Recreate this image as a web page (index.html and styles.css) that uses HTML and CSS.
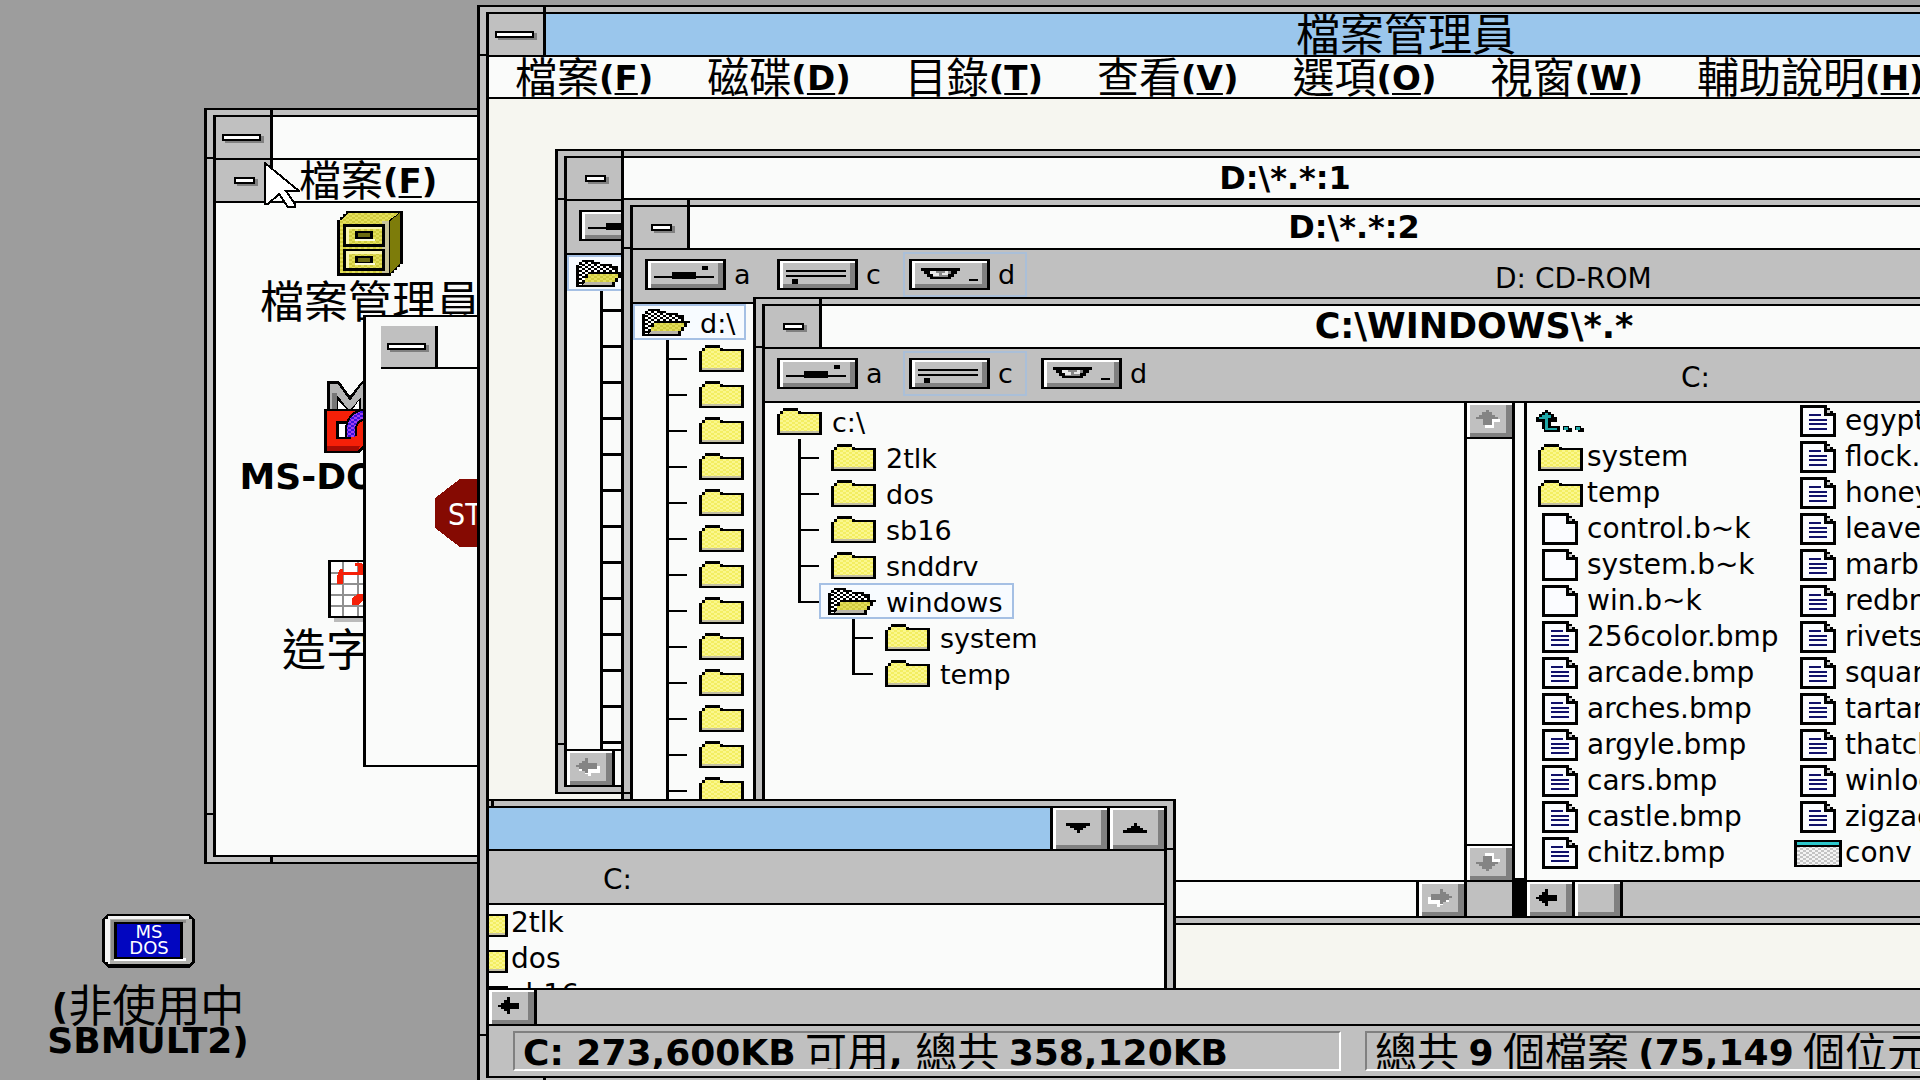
FILE: index.html
```html
<!DOCTYPE html>
<html lang="zh-Hant">
<head>
<meta charset="utf-8">
<title>檔案管理員</title>
<link rel="stylesheet" href="styles.css">
</head>
<body>
<svg class="defs" width="0" height="0" aria-hidden="true">
  <defs>
    <pattern id="dither-yellow" width="6" height="4" patternUnits="userSpaceOnUse"><rect width="6" height="4" fill="#fbf78e"/><rect width="3" height="2" fill="#f3ee62"/><rect x="3" y="2" width="3" height="2" fill="#f3ee62"/></pattern>
    <pattern id="dither-olive" width="6" height="4" patternUnits="userSpaceOnUse"><rect width="6" height="4" fill="#e4df5c"/><rect width="3" height="2" fill="#cfca3e"/><rect x="3" y="2" width="3" height="2" fill="#cfca3e"/></pattern>
    <pattern id="dither-black" width="6" height="4" patternUnits="userSpaceOnUse"><rect width="6" height="4" fill="#fff"/><rect width="3" height="2" fill="#000"/><rect x="3" y="2" width="3" height="2" fill="#000"/></pattern>
    <pattern id="dither-gray" width="6" height="4" patternUnits="userSpaceOnUse"><rect width="6" height="4" fill="#f4f4f4"/><rect width="3" height="2" fill="#c4c4c4"/><rect x="3" y="2" width="3" height="2" fill="#c4c4c4"/></pattern>
    <pattern id="dither-purple" width="6" height="4" patternUnits="userSpaceOnUse"><rect width="6" height="4" fill="#3a10e0"/><rect width="3" height="2" fill="#a040f0"/><rect x="3" y="2" width="3" height="2" fill="#a040f0"/></pattern>
  </defs>
  <symbol id="folder" viewBox="0 0 45 27"><path d="M0 6H3V3H6V0H21V3H24V4H45V27H0Z"/><path d="M6 3H21V6H42V23H3V6H6Z" fill="url(#dither-yellow)"/><path d="M3 23H42V25H3Z" fill="#c4c0a4"/></symbol>
  <symbol id="folder-open" viewBox="0 0 48 27"><path d="M0 5H3V2H6V0H18V2H24V4H36V6H42V12H48V14H45V18H42V22H39V27H0Z"/><path d="M3 5H6V2H18V4H24V6H36V8H39V12H12V16H9V20H6V25H3Z" fill="url(#dither-black)"/><path d="M12 14H42V18H39V22H9V18H12Z" fill="url(#dither-olive)"/><path d="M9 22H36V25H6Z" fill="#b8b4a8"/></symbol>
  <symbol id="doc" viewBox="0 0 36 32"><path d="M0 0H27V3H30V6H33V8H36V32H0Z"/><path d="M3 3H24V11H33V29H3Z" fill="#fbfcff"/><path d="M27 5H30V8H27Z" fill="#ccc"/></symbol>
  <symbol id="doc-text" viewBox="0 0 36 32"><use href="#doc" width="36" height="32"/><path d="M9 9H21V11H9ZM9 14H27V16H9ZM9 18H27V20H9ZM9 23H27V25H9Z" fill="#10106a"/></symbol>
  <symbol id="program" viewBox="0 0 48 27"><path d="M0 0H48V27H0Z"/><path d="M3 2H45V5H3Z" fill="#2cc8cc"/><path d="M3 7H45V25H3Z" fill="url(#dither-gray)"/></symbol>
  <symbol id="up-dir" viewBox="0 0 48 22"><path d="M9 0H12V2H15V4H18V7H21V12H15V16H24V22H8V19H6V12H0V7H3V4H6V2H9Z"/><path d="M9 3H12V5H15V8H12V18H21V20H9V9H3V7H6V5H9Z" fill="#1fa8a8"/><path d="M27 16H33V18H36V22H30V20H27ZM39 16H45V18H48V22H42V20H39Z"/><path d="M28 17H32V20H28ZM40 17H44V20H40Z" fill="#1fa8a8"/></symbol>
  <symbol id="floppy" viewBox="0 0 75 27"><path d="M6 15H24V11H48V15H66V17H48V18H24V17H6ZM54 5H60V9H54Z"/></symbol>
  <symbol id="harddisk" viewBox="0 0 75 27"><path d="M6 9H66V11H6ZM6 14H66V16H6ZM12 18H18V23H12Z"/></symbol>
  <symbol id="cdrom" viewBox="0 0 75 27"><path d="M9 7H48V10H45V13H42V16H39V18H18V16H15V13H12V10H9Z"/><path d="M18 10H39V13H36V16H21V13H18Z" fill="#888"/><path d="M18 10H24V12H27V15H21V13H18ZM30 12H33V10H36V14H30Z" fill="#e8e8e8"/><path d="M57 18H66V20H57Z"/></symbol>
  <symbol id="arrow" viewBox="0 0 24 18"><path d="M0 8H3V6H6V3H9V0H12V6H21V12H12V17H9V14H6V12H3V10H0Z"/></symbol>
  <symbol id="arrow-off" viewBox="0 0 24 18"><path d="M3 9H6V12H9V14H12V8H24V15H15V18H12V16H9V13H3Z" fill="#fff"/><path d="M0 7H3V5H6V3H9V0H12V5H21V11H12V15H9V13H6V11H3V9H0Z" fill="#848484"/></symbol>
  <symbol id="arrow-off-v" viewBox="0 0 24 18"><path d="M9 9H24V12H18V18H9Z" fill="#fff"/><path d="M10 0H13V2H16V5H19V7H22V9H16V15H7V9H0V7H3V5H6V2H10Z" fill="#848484"/></symbol>
</svg>

<main class="desktop">
  <section class="window program-manager">
    <div class="frame">
      <header class="titlebar"><button class="sys" aria-label="控制功能表"><i class="dash"></i></button></header>
      <nav class="menubar with-sys">
        <button class="sys" aria-label="控制功能表"><i class="dash small"></i></button>
        <button class="menu">檔案<b>(<u>F</u>)</b></button>
      </nav>
      <div class="icons">
        <div class="program">
          <span class="picture"><svg width="66" height="65" viewBox="0 0 66 65" shape-rendering="crispEdges">
            <path d="M0 9H3V6H6V3H9V0H66V53H63V56H60V59H57V62H54V65H0Z"/>
            <path d="M4 9L11 2H62L51 10H4Z" fill="url(#dither-olive)"/><path d="M3 9H51V62H3Z" fill="url(#dither-olive)"/>
            <path d="M45 10H52V62H45Z" fill="#c9c49a"/><path d="M53 10L63 2V52L53 62Z" fill="#7d7c0a"/>
            <path d="M6 13H48V36H6ZM6 38H48V60H6Z"/><path d="M9 16H45V33H9ZM9 40H45V57H9Z" fill="#f9f5b0"/>
            <path d="M12 18H45V33H12ZM12 43H45V57H12Z" fill="url(#dither-olive)"/>
            <path d="M18 20H36V28H18ZM18 45H36V52H18Z"/><path d="M21 22H33V26H21ZM21 47H33V51H21Z" fill="#6d6c10"/><path d="M18 28H38V30H18ZM18 52H38V54H18Z" fill="#fdfbd8"/>
          </svg></span>
          <span class="caption">檔案管理員</span>
        </div>
        <div class="program">
          <span class="picture"><svg width="92" height="72" viewBox="0 0 92 72">
            <path d="M3 0H15L26 15L38 0H48V30H3Z"/><path d="M6 3H14L26 20L38 3H46V28H37V16L27 28H24L13 14V28H6Z" fill="#b4b4b4"/><path d="M8 12H13V28H8Z" fill="#777"/><path d="M14 20L22 28H14ZM35 19V28H29Z" fill="#fff"/>
            <path d="M0 28H36L46 38V60L36 72H0Z"/><path d="M3 30H34L43 38V60L34 70H3Z" fill="#f52008"/><path d="M3 65H36L34 70H3Z" fill="#a80c04"/>
            <path d="M12 40H27V58H12Z"/><path d="M15 43H24V56H15Z" fill="#fff"/>
            <path d="M27 56C25 40 32 33 46 33" fill="none" stroke="#000" stroke-width="12"/><path d="M27 56C25 40 32 33 46 33" fill="none" stroke="url(#dither-purple)" stroke-width="8"/>
          </svg></span>
          <span class="caption"><b>MS-DOS</b> 模式</span>
        </div>
        <div class="program">
          <span class="picture"><svg width="84" height="62" viewBox="0 0 84 62">
            <path d="M6 6H84V62H6Z" fill="#bbb"/><path d="M0 0H78V58H0Z"/><path d="M3 2H75V56H3Z" fill="#fff"/>
            <path d="M15 2V56M30 2V56M45 2V56M3 13H75M3 24H75M3 35H75M3 46H75" stroke="#909090" stroke-width="2"/>
            <path d="M9 24V16L12 9H15V12H30V6H27V3H33L36 6V15H15V24ZM24 45V38L30 34H36V40L30 45Z" fill="#f52008"/>
          </svg></span>
          <span class="caption">造字程式</span>
        </div>
      </div>
    </div>
  </section>

  <section class="dialog">
    <header class="titlebar"><button class="sys" aria-label="控制功能表"><i class="dash"></i></button></header>
    <svg class="stop" width="75" height="68" viewBox="0 0 75 68"><path d="M25 0H50L75 19V49L50 68H25L0 49V19Z" fill="#850a02"/><text x="13" y="46">STOP</text></svg>
  </section>

  <div class="minimized">
    <svg width="93" height="54" viewBox="0 0 93 54"><path d="M6 0H87L93 5V48L87 54H6L0 48V5Z"/><path d="M6 2H87V50H6ZM3 5H90V48H3Z" fill="#f4f4f4"/><path d="M8 5H90V48L87 50H8Z" fill="#b0b0ac"/><path d="M9 6H84V9H12V46H9Z" fill="#8c8c88"/><path d="M12 44H84V47H12Z" fill="#fff"/><path d="M12 8H81V45H12Z"/><path d="M15 10H78V43H15Z" fill="#0206c0"/><text x="47" y="24">MS</text><text x="47" y="40">DOS</text></svg>
    <span class="caption"><b>(</b>非使用中</span>
    <span class="caption"><b>SBMULT2)</b></span>
  </div>

  <section class="window file-manager">
    <div class="frame">
      <header class="titlebar active">
        <button class="sys" aria-label="控制功能表"><i class="dash"></i></button>
        <h1 class="title app-title">檔案管理員</h1>
      </header>
      <nav class="menubar app-menu">
        <button class="menu">檔案<b>(<u>F</u>)</b></button>
        <button class="menu">磁碟<b>(<u>D</u>)</b></button>
        <button class="menu">目錄<b>(<u>T</u>)</b></button>
        <button class="menu">查看<b>(<u>V</u>)</b></button>
        <button class="menu">選項<b>(<u>O</u>)</b></button>
        <button class="menu">視窗<b>(<u>W</u>)</b></button>
        <button class="menu">輔助說明<b>(<u>H</u>)</b></button>
      </nav>

      <div class="workspace">
        <section class="window doc-one">
          <div class="frame">
            <header class="titlebar">
              <button class="sys" aria-label="控制功能表"><i class="dash small"></i></button>
              <h2 class="title">D:\*.*:1</h2>
            </header>
            <div class="drivebar">
              <div class="drive"><button aria-label="a"><svg><use href="#floppy"/></svg></button></div>
            </div>
            <div class="pane">
              <div class="row"><span class="node selected"><svg class="open"><use href="#folder-open"/></svg></span></div>
              <ul class="branches heavy">
                <li><i class="tick"></i></li><li><i class="tick"></i></li><li><i class="tick"></i></li><li><i class="tick"></i></li>
                <li><i class="tick"></i></li><li><i class="tick"></i></li><li><i class="tick"></i></li><li><i class="tick"></i></li>
                <li><i class="tick"></i></li><li><i class="tick"></i></li><li><i class="tick"></i></li><li><i class="tick"></i></li><li><i class="tick"></i></li><li><i class="tick"></i></li>
              </ul>
            </div>
            <div class="hscroll pale"><button class="arrow end-line" aria-label="向左"><svg><use href="#arrow-off"/></svg></button></div>
          </div>
        </section>

        <section class="window doc-two">
          <div class="frame">
            <header class="titlebar">
              <button class="sys" aria-label="控制功能表"><i class="dash small"></i></button>
              <h2 class="title">D:\*.*:2</h2>
            </header>
            <div class="drivebar">
              <div class="drive"><button id="two-a" aria-label="磁碟 a"><svg><use href="#floppy"/></svg></button><label for="two-a">a</label></div>
              <div class="drive"><button id="two-c" aria-label="磁碟 c"><svg><use href="#harddisk"/></svg></button><label for="two-c">c</label></div>
              <div class="drive current"><button id="two-d" aria-label="磁碟 d"><svg><use href="#cdrom"/></svg></button><label for="two-d">d</label></div>
              <span class="volume">D: CD-ROM</span>
            </div>
            <div class="pane">
              <div class="row"><span class="node selected"><svg class="open"><use href="#folder-open"/></svg><span>d:\</span></span></div>
              <ul class="branches">
                <li><i class="tick"></i><span class="node"><svg><use href="#folder"/></svg></span></li>
                <li><i class="tick"></i><span class="node"><svg><use href="#folder"/></svg></span></li>
                <li><i class="tick"></i><span class="node"><svg><use href="#folder"/></svg></span></li>
                <li><i class="tick"></i><span class="node"><svg><use href="#folder"/></svg></span></li>
                <li><i class="tick"></i><span class="node"><svg><use href="#folder"/></svg></span></li>
                <li><i class="tick"></i><span class="node"><svg><use href="#folder"/></svg></span></li>
                <li><i class="tick"></i><span class="node"><svg><use href="#folder"/></svg></span></li>
                <li><i class="tick"></i><span class="node"><svg><use href="#folder"/></svg></span></li>
                <li><i class="tick"></i><span class="node"><svg><use href="#folder"/></svg></span></li>
                <li><i class="tick"></i><span class="node"><svg><use href="#folder"/></svg></span></li>
                <li><i class="tick"></i><span class="node"><svg><use href="#folder"/></svg></span></li>
                <li><i class="tick"></i><span class="node"><svg><use href="#folder"/></svg></span></li>
                <li><i class="tick"></i><span class="node"><svg><use href="#folder"/></svg></span></li>
              </ul>
            </div>
          </div>
        </section>

        <section class="window doc-three">
          <div class="frame">
            <header class="titlebar">
              <button class="sys" aria-label="控制功能表"><i class="dash small"></i></button>
              <h2 class="title wide">C:\WINDOWS\*.*</h2>
            </header>
            <div class="drivebar">
              <div class="drive"><button id="three-a" aria-label="磁碟 a"><svg><use href="#floppy"/></svg></button><label for="three-a">a</label></div>
              <div class="drive current"><button id="three-c" aria-label="磁碟 c"><svg><use href="#harddisk"/></svg></button><label for="three-c">c</label></div>
              <div class="drive"><button id="three-d" aria-label="磁碟 d"><svg><use href="#cdrom"/></svg></button><label for="three-d">d</label></div>
              <span class="volume">C:</span>
            </div>
            <div class="split">
              <div class="column tree-column">
                <div class="pane">
                  <div class="row"><span class="node"><svg><use href="#folder"/></svg><span>c:\</span></span></div>
                  <ul class="branches">
                    <li><i class="tick"></i><span class="node"><svg><use href="#folder"/></svg><span>2tlk</span></span></li>
                    <li><i class="tick"></i><span class="node"><svg><use href="#folder"/></svg><span>dos</span></span></li>
                    <li><i class="tick"></i><span class="node"><svg><use href="#folder"/></svg><span>sb16</span></span></li>
                    <li><i class="tick"></i><span class="node"><svg><use href="#folder"/></svg><span>snddrv</span></span></li>
                    <li><i class="tick last"></i><span class="node selected"><svg class="open"><use href="#folder-open"/></svg><span>windows</span></span></li>
                  </ul>
                  <ul class="branches deep">
                    <li><i class="tick"></i><span class="node"><svg><use href="#folder"/></svg><span>system</span></span></li>
                    <li><i class="tick last"></i><span class="node"><svg><use href="#folder"/></svg><span>temp</span></span></li>
                  </ul>
                </div>
                <div class="hscroll pale align-end"><button class="arrow start-line" aria-label="向右"><svg class="flip"><use href="#arrow-off"/></svg></button></div>
              </div>
              <div class="column vscroll">
                <button class="arrow" aria-label="向上"><svg><use href="#arrow-off-v"/></svg></button>
                <div class="track"></div>
                <button class="arrow" aria-label="向下"><svg class="down"><use href="#arrow-off-v"/></svg></button>
                <div class="corner"></div>
              </div>
              <div class="splitter"></div>
              <div class="column file-column">
                <ul class="files">
                  <li><i class="kind"><svg class="up"><use href="#up-dir"/></svg></i></li>
                  <li><i class="kind"><svg><use href="#folder"/></svg></i>system</li>
                  <li><i class="kind"><svg><use href="#folder"/></svg></i>temp</li>
                  <li><i class="kind"><svg class="doc"><use href="#doc"/></svg></i>control.b~k</li>
                  <li><i class="kind"><svg class="doc"><use href="#doc"/></svg></i>system.b~k</li>
                  <li><i class="kind"><svg class="doc"><use href="#doc"/></svg></i>win.b~k</li>
                  <li><i class="kind"><svg class="doc"><use href="#doc-text"/></svg></i>256color.bmp</li>
                  <li><i class="kind"><svg class="doc"><use href="#doc-text"/></svg></i>arcade.bmp</li>
                  <li><i class="kind"><svg class="doc"><use href="#doc-text"/></svg></i>arches.bmp</li>
                  <li><i class="kind"><svg class="doc"><use href="#doc-text"/></svg></i>argyle.bmp</li>
                  <li><i class="kind"><svg class="doc"><use href="#doc-text"/></svg></i>cars.bmp</li>
                  <li><i class="kind"><svg class="doc"><use href="#doc-text"/></svg></i>castle.bmp</li>
                  <li><i class="kind"><svg class="doc"><use href="#doc-text"/></svg></i>chitz.bmp</li>
                  <li><i class="kind"><svg class="doc"><use href="#doc-text"/></svg></i>egypt.bmp</li>
                  <li><i class="kind"><svg class="doc"><use href="#doc-text"/></svg></i>flock.bmp</li>
                  <li><i class="kind"><svg class="doc"><use href="#doc-text"/></svg></i>honey.bmp</li>
                  <li><i class="kind"><svg class="doc"><use href="#doc-text"/></svg></i>leaves.bmp</li>
                  <li><i class="kind"><svg class="doc"><use href="#doc-text"/></svg></i>marble.bmp</li>
                  <li><i class="kind"><svg class="doc"><use href="#doc-text"/></svg></i>redbrick.bmp</li>
                  <li><i class="kind"><svg class="doc"><use href="#doc-text"/></svg></i>rivets.bmp</li>
                  <li><i class="kind"><svg class="doc"><use href="#doc-text"/></svg></i>squares.bmp</li>
                  <li><i class="kind"><svg class="doc"><use href="#doc-text"/></svg></i>tartan.bmp</li>
                  <li><i class="kind"><svg class="doc"><use href="#doc-text"/></svg></i>thatch.bmp</li>
                  <li><i class="kind"><svg class="doc"><use href="#doc-text"/></svg></i>winlogo.bmp</li>
                  <li><i class="kind"><svg class="doc"><use href="#doc-text"/></svg></i>zigzag.bmp</li>
                  <li><i class="kind"><svg class="exe"><use href="#program"/></svg></i>conv</li>
                </ul>
                <div class="hscroll">
                  <button class="arrow end-line" aria-label="向左"><svg><use href="#arrow"/></svg></button>
                  <button class="arrow end-line" aria-label="捲動方塊"></button>
                </div>
              </div>
            </div>
          </div>
        </section>

        <section class="window doc-four">
          <div class="frame">
            <header class="titlebar active">
              <span class="title"></span>
              <button class="arrow start-line" aria-label="最小化"><svg class="caret" viewBox="0 0 24 10"><path d="M0 0H24V3H20V5H17V7H14V10H11V7H8V5H4V3H0Z"/></svg></button>
              <button class="arrow start-line" aria-label="最大化"><svg class="caret" viewBox="0 0 24 10"><path d="M0 10H24V7H20V5H17V3H14V0H11V3H8V5H4V7H0Z"/></svg></button>
            </header>
            <div class="drivebar"><span class="volume">C:</span></div>
            <ul class="files">
              <li><i class="kind"><svg><use href="#folder"/></svg></i>2tlk</li>
              <li><i class="kind"><svg><use href="#folder"/></svg></i>dos</li>
              <li><i class="kind"><svg><use href="#folder"/></svg></i>sb16</li>
            </ul>
          </div>
        </section>
      </div>

      <div class="hscroll app-scroll"><button class="arrow end-line" aria-label="向左"><svg><use href="#arrow"/></svg></button></div>
      <footer class="status">
        <div class="panel first"><b>C: 273,600KB</b> 可用<b>, </b>總共 <b>358,120KB</b></div>
        <div class="panel">總共 <b>9</b> 個檔案 <b>(75,149</b> 個位元組<b>)</b></div>
      </footer>
    </div>
  </section>

  <svg class="pointer" width="36" height="46" viewBox="0 0 36 46"><path d="M1 1L35 29H22L31 42V45H24L15 32L4 42H1Z" fill="#fff" stroke="#000" stroke-width="2"/></svg>
</main>
</body>
</html>
```
FILE: styles.css
```css
:root {
  --face: #c0c0c0;
  --paper: #fafbfa;
  --desk: #9d9d9d;
  --work: #f6f6f0;
  --active: #9ac6ec;
  --focus: #a5c0e4;
  --shade: #808080;
  --cjk: "Noto Sans CJK TC", sans-serif;
  --latin: "DejaVu Sans", "Noto Sans CJK TC", sans-serif;
}

* { box-sizing: border-box; }

body {
  margin: 0;
  height: 100vh;
  overflow: hidden;
  background: var(--desk);
  color: #000;
  font: 27px/36px var(--latin);
}

ul { list-style: none; margin: 0; padding: 0; }
h1, h2 { margin: 0; }
svg { display: block; flex: none; shape-rendering: crispEdges; }
.defs { position: absolute; }

button {
  margin: 0;
  padding: 0;
  border: 0;
  border-radius: 0;
  background: none;
  color: inherit;
  font: inherit;
}

/* Latin runs sit a little above the ideographic baseline without growing the line */
b { font: bold 36px/0 var(--latin); vertical-align: 3px; }
u { text-decoration-thickness: 2px; text-underline-offset: 3px; }

.desktop { position: relative; height: 100%; overflow: hidden; }

/* Windows: a black outer line, a gray band with corner marks, a black inner line */
.window {
  position: absolute;
  border: solid #000;
  border-width: 2px 3px;
  padding: 5px 6px;
  background:
    linear-gradient(#000, #000) 63px 0 / 3px 100% no-repeat,
    linear-gradient(#000, #000) 0 47px / 100% 2px no-repeat,
    linear-gradient(#000, #000) 0 calc(100% - 47px) / 100% 2px no-repeat,
    var(--face);
}
.frame {
  height: 100%;
  display: flex;
  flex-direction: column;
  border: solid #000;
  border-width: 2px 3px;
  background: var(--paper);
  overflow: hidden;
}

.titlebar {
  flex: none;
  display: flex;
  height: 43px;
  border-bottom: 2px solid #000;
}
.titlebar.active { background: var(--active); }
.title {
  flex: 1;
  text-align: center;
  font: bold 32px/41px var(--latin);
}
.title.wide { font-size: 35px; }
.app-title { font: 44px/36px var(--cjk); }

.sys {
  flex: none;
  width: 57px;
  display: flex;
  align-items: center;
  justify-content: center;
  padding-right: 3px;
  border-right: 3px solid #000;
  background: var(--face);
}
.dash {
  width: 39px;
  height: 7px;
  border: 2px solid #000;
  background: #fff;
  box-shadow: 3px 2px var(--shade);
}
.dash.small { width: 21px; margin-left: 5px; }

.menubar {
  flex: none;
  display: flex;
  height: 43px;
  border-bottom: 2px solid #000;
}
.app-menu { height: 42px; padding-left: 26px; gap: 54px; }
.with-sys { gap: 26px; }
.menu {
  height: 36px;
  white-space: nowrap;
  font: 42px/36px var(--cjk);
}
.menu b { font-size: 34px; }

.program-manager { left: 204px; top: 108px; width: 640px; height: 756px; }
.icons { width: 308px; padding-top: 4px; }
.program {
  height: 174px;
  display: flex;
  flex-direction: column;
  align-items: center;
}
.picture { height: 72px; display: flex; align-items: center; }
.caption { white-space: nowrap; font: 44px/40px var(--cjk); }

.dialog {
  position: absolute;
  left: 363px;
  top: 315px;
  width: 420px;
  height: 452px;
  padding: 9px 15px;
  border: solid #000;
  border-width: 2px 3px;
  background: var(--paper);
}
.stop { margin: 110px 0 0 54px; }
.stop text { fill: #fff; font: 30px "DejaVu Sans Condensed", "DejaVu Sans", sans-serif; }

.minimized {
  position: absolute;
  left: 28px;
  top: 914px;
  width: 240px;
  display: flex;
  flex-direction: column;
  align-items: center;
}
.minimized svg { margin-bottom: 18px; }
.minimized text { fill: #fff; font: 18px "DejaVu Sans", sans-serif; text-anchor: middle; }
.minimized .caption { line-height: 34px; }

.file-manager { left: 477px; right: -358px; top: 5px; bottom: -5px; }
.workspace {
  position: relative;
  flex: 1;
  min-height: 0;
  overflow: hidden;
  background: var(--work);
}
.doc-one { left: 66px; right: 308px; top: 50px; height: 645px; }
.doc-two { left: 132px; right: 236px; top: 99px; height: 645px; }
.doc-three { left: 264px; right: 128px; top: 198px; height: 628px; }
.doc-four { left: -64px; width: 751px; top: 700px; height: 300px; }

.drivebar {
  flex: none;
  display: flex;
  height: 54px;
  padding-left: 2px;
  border-bottom: 2px solid #000;
  background: var(--face);
}
.drive {
  flex: none;
  width: 124px;
  height: 45px;
  margin: 2px 4px 0;
  display: flex;
  align-items: center;
  gap: 8px;
  padding: 0 6px;
}
.drive.current { box-shadow: inset 0 0 0 2px #aabfd8; }
.drive button {
  flex: none;
  width: 81px;
  height: 31px;
  border: solid #000;
  border-width: 2px 3px;
  background: var(--face);
  box-shadow: inset 3px 2px #fff, inset -5px -4px var(--shade);
}
.drive svg { width: 75px; height: 27px; }
.volume { padding-top: 11px; font-size: 28px; }
.doc-two .volume { margin-left: 464px; }
.doc-three .volume { margin-left: 518px; }
.doc-four .volume { margin-left: 164px; }

.pane { flex: 1; min-height: 0; overflow: hidden; }
.row, .branches li { display: flex; height: 36px; }
.branches { padding-left: 33px; }
.branches.deep { padding-left: 87px; }
.tick {
  flex: none;
  width: 21px;
  background:
    linear-gradient(#000, #000) 0 0 / 3px 100% no-repeat,
    linear-gradient(#000, #000) 0 18px / 100% 2px no-repeat;
}
.tick.last {
  background:
    linear-gradient(#000, #000) 0 0 / 3px 19px no-repeat,
    linear-gradient(#000, #000) 0 18px / 100% 2px no-repeat;
}
.heavy .tick {
  background:
    linear-gradient(#000, #000) 0 0 / 3px 100% no-repeat,
    linear-gradient(#000, #000) 0 18px / 100% 3px no-repeat;
}
.node {
  display: flex;
  align-items: center;
  gap: 10px;
  padding: 0 11px 0 12px;
}
.node span { padding-top: 4px; }
.node svg, .kind svg { width: 45px; height: 27px; }
.node svg.open { width: 48px; margin-left: -3px; }
.selected { background: #f7fbff; box-shadow: inset 0 0 0 2px var(--focus); }

.split { flex: 1; min-height: 0; display: flex; }
.column { display: flex; flex-direction: column; }
.tree-column { flex: none; width: 702px; border-right: 3px solid #000; }
.vscroll { flex: none; width: 45px; }
.vscroll .track { flex: 1; border: solid #000; border-width: 2px 0; }
.corner { height: 36px; border-top: 2px solid #000; background: var(--face); }
.splitter {
  flex: none;
  width: 15px;
  border: solid #000;
  border-width: 0 3px 38px;
}
.file-column { flex: 1; min-width: 0; overflow: hidden; }

.files {
  flex: 1;
  min-height: 0;
  display: grid;
  grid-template-rows: repeat(13, 36px);
  grid-auto-flow: column;
  grid-auto-columns: 258px;
  padding-left: 9px;
  font-size: 28px;
}
.doc-four .files { padding-left: 23px; }
.files li { display: flex; align-items: center; gap: 3px; line-height: 40px; }
.kind { flex: none; width: 48px; display: flex; justify-content: center; }
.doc-four .kind { justify-content: flex-end; }
.kind svg.doc { width: 36px; height: 32px; }
.kind svg.exe { width: 48px; }
.kind svg.up { width: 48px; height: 22px; }

.hscroll {
  flex: none;
  display: flex;
  height: 36px;
  border-top: 2px solid #000;
  background: var(--face);
}
.hscroll.pale { background: var(--paper); }
.align-end { justify-content: flex-end; }
.app-scroll { height: 38px; border-bottom: 2px solid #000; }
.arrow {
  flex: none;
  width: 45px;
  height: 34px;
  display: flex;
  align-items: center;
  justify-content: center;
  padding: 0 4px 2px 0;
  background: var(--face);
  box-shadow: inset 3px 2px #fff, inset -6px -4px var(--shade);
}
.arrow svg { width: 24px; height: 18px; }
.arrow .flip { transform: scaleX(-1); }
.arrow .down { transform: scaleY(-1); }
.end-line { width: 48px; border-right: 3px solid #000; }
.start-line { width: 48px; border-left: 3px solid #000; }
.titlebar .arrow { width: 57px; height: 41px; }
.arrow svg.caret { width: 24px; height: 10px; }

.status {
  flex: none;
  display: flex;
  gap: 24px;
  height: 50px;
  padding: 5px 24px;
  background: var(--face);
}
.panel {
  flex: 1;
  padding-left: 8px;
  border: 2px solid;
  border-color: var(--shade) #fff #fff var(--shade);
  white-space: nowrap;
  overflow: hidden;
  font: 42px/34px var(--cjk);
}
.panel.first { flex: none; width: 828px; }

.pointer { position: absolute; left: 264px; top: 162px; }
```
